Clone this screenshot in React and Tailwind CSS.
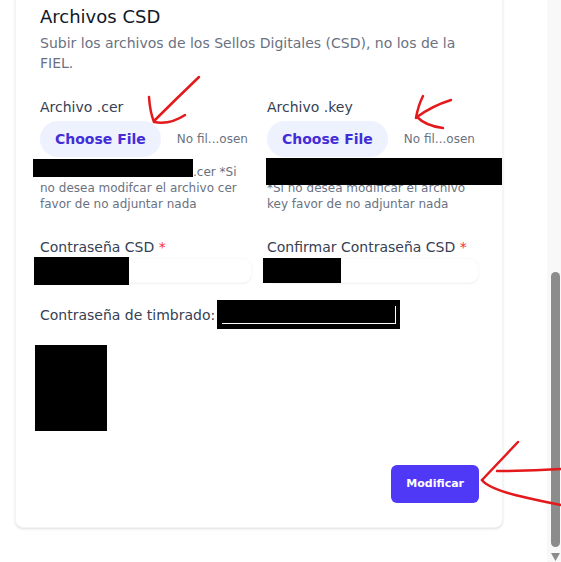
import React from "react";

function FileField({ label, children }) {
  return (
    <div>
      <div className="text-sm leading-5 text-gray-700">{label}</div>
      <div className="mt-1 flex items-center gap-[16px]">
        <span className="flex h-9 items-center rounded-full bg-indigo-50 px-[15px] text-sm font-bold text-indigo-700">
          Choose File
        </span>
        <span className="text-xs text-gray-500">No fil...osen</span>
      </div>
      {children}
    </div>
  );
}

function PasswordField({ label, boxClass }) {
  return (
    <div>
      <div className="text-sm leading-5 text-gray-700">
        {label} <span className="text-red-500">*</span>
      </div>
      <div className="relative mt-[2px] h-[23px] rounded-lg bg-white shadow-sm ring-1 ring-gray-50">
        <div className={boxClass} />
      </div>
    </div>
  );
}

export default function App() {
  return (
    <div className="relative flex h-[562px] w-[561px] overflow-hidden bg-white font-['DejaVu_Sans',sans-serif]">
      <div className="flex-1">
        <div className="-mt-[20px] ml-[15px] w-[488px] rounded-lg border border-gray-100 bg-white px-6 pb-6 pt-[22px] shadow-sm">
          <h2 className="text-lg leading-7 text-gray-900">Archivos CSD</h2>
          <p className="mt-[2px] text-sm leading-5 text-gray-500">
            Subir los archivos de los Sellos Digitales (CSD), no los de la FIEL.
          </p>

          <div className="mt-6 grid grid-cols-2 gap-4">
            <FileField label="Archivo .cer">
              <p className="mt-[7px] text-xs leading-4 text-gray-500">
                <span className="-ml-[7px] -mt-[6px] inline-block h-[18px] w-[160px] bg-black align-[-1px]" />
                .cer *Si no desea modifcar el archivo cer favor de no adjuntar nada
              </p>
            </FileField>
            <FileField label="Archivo .key">
              <div className="mt-[7px] text-xs leading-4 text-gray-500">
                <div className="relative z-10 -mb-[5px] -ml-[1px] -mt-[6px] h-[27px] w-[236px] bg-black" />
                <p>*Si no desea modificar el archivo key favor de no adjuntar nada</p>
              </div>
            </FileField>
          </div>

          <div className="mt-[25px] grid grid-cols-2 gap-4">
            <PasswordField
              label="Contraseña CSD"
              boxClass="absolute -left-[6px] -top-[2px] h-[28px] w-[95px] bg-black"
            />
            <PasswordField
              label="Confirmar Contraseña CSD"
              boxClass="absolute -left-[4px] -top-[1px] h-[25px] w-[78px] bg-black"
            />
          </div>

          <div className="mt-[18px] flex h-[29px] items-center">
            <span className="text-sm leading-5 text-gray-700">Contraseña de timbrado:</span>
            <div className="relative ml-[2px] h-[29px] w-[183px] bg-black">
              <div className="absolute left-[5px] top-[6px] h-[18px] w-[174px] border-b border-r border-white" />
            </div>
          </div>

          <div className="-ml-[5px] mt-4 h-[86px] w-[72px] bg-black" />

          <div className="mt-[34px] flex justify-end">
            <button className="-mr-px flex h-[38px] items-center rounded-md bg-indigo-600 px-[15px] text-[11px] font-bold text-white">
              Modificar
            </button>
          </div>
        </div>
      </div>

      {/* scrollbar */}
      <div className="flex w-[14px] flex-col items-center bg-[#f8f8f8]">
        <div className="ml-[3px] mt-[272px] h-[275px] w-[9px] rounded-full bg-[#8c8c8c]" />
        <svg className="ml-[3px] mt-[6px]" width="9" height="8" viewBox="0 0 9 8">
          <polygon points="0,0 9,0 4.5,8" fill="#8c8c8c" />
        </svg>
      </div>

      {/* hand-drawn red marks */}
      <svg
        className="pointer-events-none absolute left-0 top-0"
        width="561"
        height="562"
        viewBox="0 0 561 562"
        fill="none"
        stroke="#e3191c"
        strokeWidth="2.5"
        strokeLinecap="round"
        strokeLinejoin="round"
      >
        <path d="M199,77 Q176,99 154,121" />
        <path d="M149,97 Q150,112 154,122 Q170,125 185,115" />
        <path d="M423,96 Q418,106 416,118" />
        <path d="M451,100 Q432,106 417,117 Q426,126 443,128" />
        <path d="M518,442 Q500,461 482,480" />
        <path d="M482,480 Q488,488 515,495 Q540,501 561,505" />
        <path d="M497,471 Q530,471 561,469" />
      </svg>
    </div>
  );
}
